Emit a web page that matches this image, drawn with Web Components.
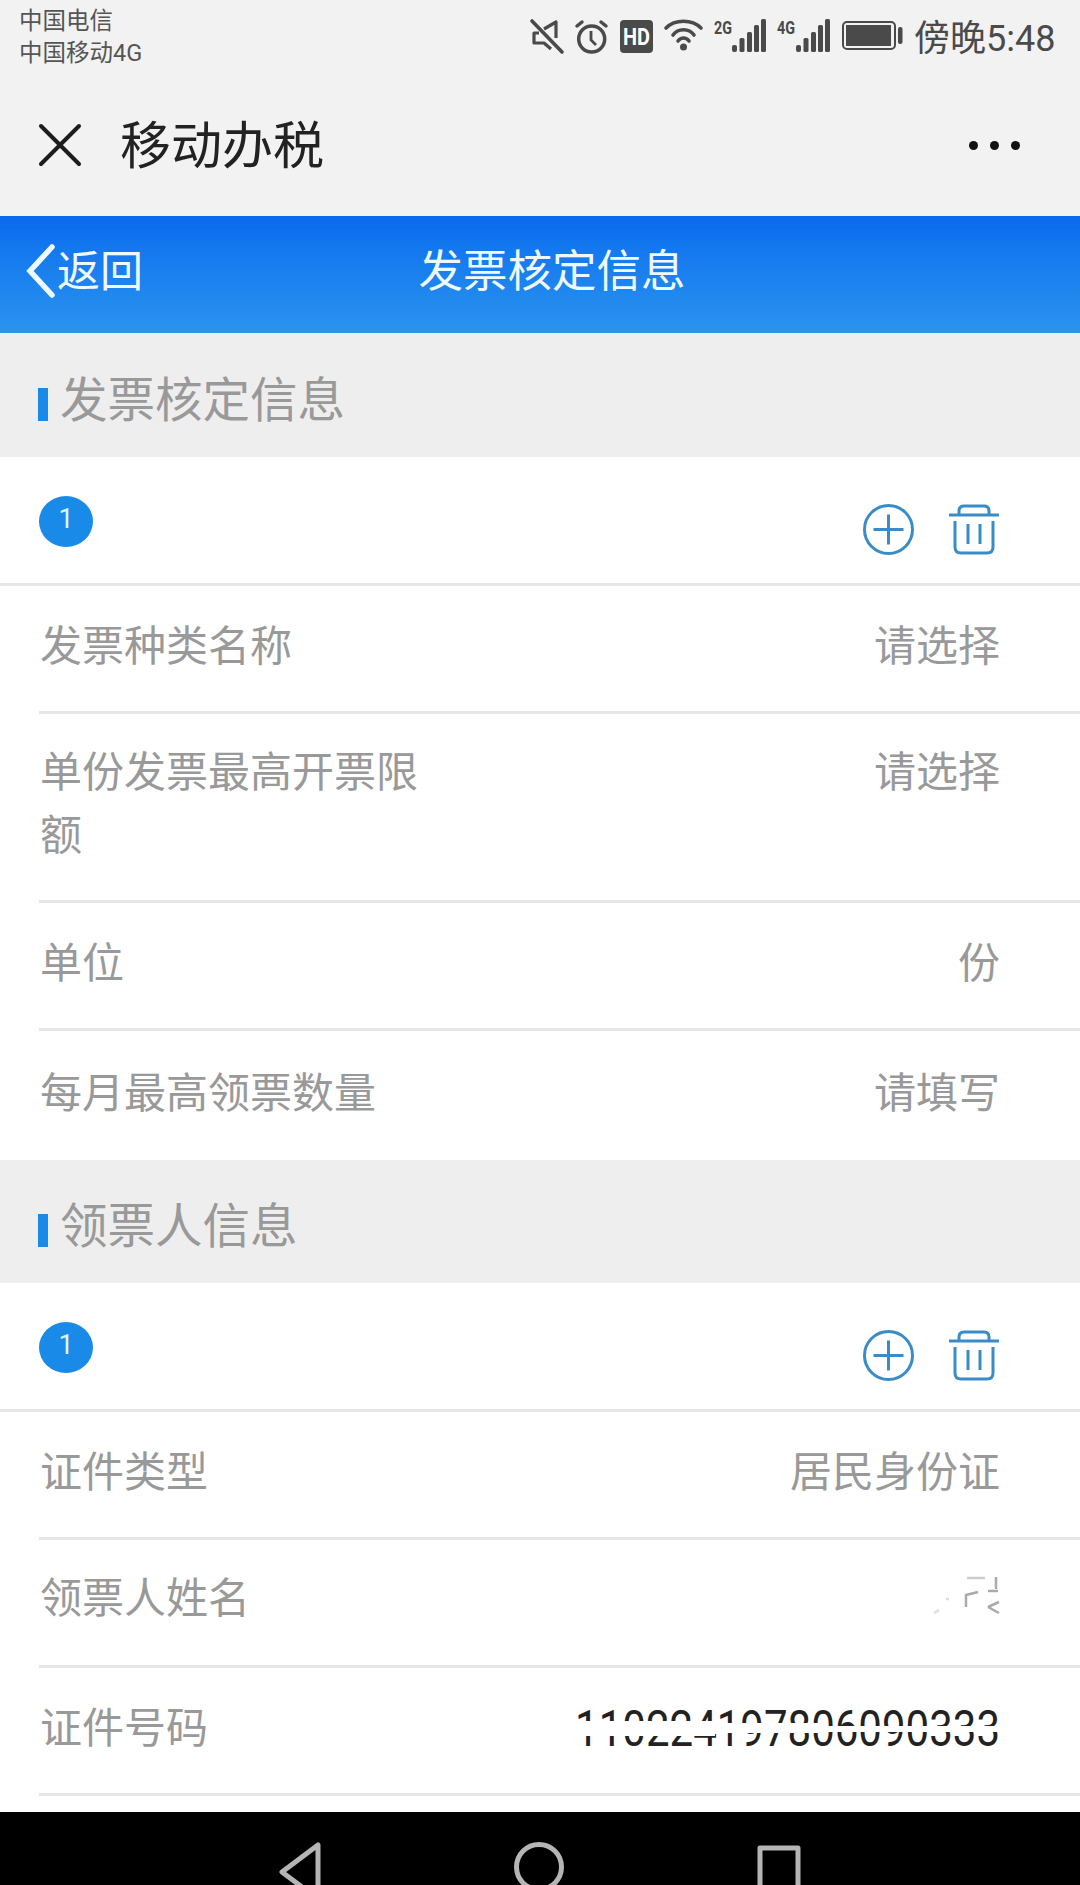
<!DOCTYPE html>
<html lang="zh">
<head>
<meta charset="utf-8">
<title>发票核定信息</title>
<style>
  html, body { margin: 0; padding: 0; }
  body {
    width: 1080px; height: 1885px; overflow: hidden; background: #fff;
    display: flex; flex-direction: column;
    font-family: Roboto, "Noto Sans CJK SC", sans-serif;
  }
</style>
</head>
<body>
  <status-bar></status-bar>
  <app-bar>移动办税</app-bar>
  <nav-bar back="返回">发票核定信息</nav-bar>
  <section-head style="height:124px">发票核定信息</section-head>
  <index-row>1</index-row>
  <form-row value="请选择">发票种类名称</form-row>
  <form-row value="请选择" class="tall">单份发票最高开票限额</form-row>
  <form-row value="份">单位</form-row>
  <form-row value="请填写" last>每月最高领票数量</form-row>
  <section-head>领票人信息</section-head>
  <index-row>1</index-row>
  <form-row value="居民身份证">证件类型</form-row>
  <form-row style="padding-top:27px;padding-bottom:35px">领票人姓名<redacted-name slot="value"></redacted-name></form-row>
  <form-row>证件号码<redacted-id slot="value">110224197806090333</redacted-id></form-row>
  <key-bar></key-bar>

<script>
const statusTemplate = `
<style>
  :host { display: flex; height: 72px; background: #f2f2f2; color: #4a4a4a; align-items: flex-start; justify-content: space-between; }
  .carriers { padding: 5px 0 0 19px; font-size: 23.5px; line-height: 32px; color: #555; }
  .icons { display: flex; align-items: flex-start; gap: 11.5px; height: 52px; padding: 20px 26px 0 0; }
  svg { display: block; overflow: visible; }
  .time { font-size: 36px; line-height: 34px; width: 140px; white-space: nowrap; margin-top: 2px; }
  text { font-family: Roboto, sans-serif; font-weight: 700; }
</style>
<div class="carriers"><div>中国电信</div><div>中国移动4G</div></div>
<div class="icons">
  <svg width="33" height="33" viewBox="0 0 33 33" fill="none" stroke="#4a4a4a" stroke-width="3.200" stroke-linejoin="round">
    <path d="M8 13H3v10h10l7 6M13 9l12-7v16"/>
    <path d="M1 1l30 31" stroke-width="3.600" stroke-linecap="round"/>
  </svg>
  <svg width="33" height="33" viewBox="0 0 33 33" fill="none" stroke="#4a4a4a" stroke-width="3.500">
    <circle cx="16.700" cy="19" r="13"/>
    <path d="M16 11v9l5 5" stroke-width="2.800"/>
    <path d="M2 6l5-4M31 6l-5-4" stroke-linecap="round"/>
  </svg>
  <svg width="33" height="33" viewBox="0 0 33 33">
    <rect width="33" height="33" rx="4" fill="#4a4a4a"/>
    <text x="16.500" y="25" font-size="24" fill="#fff" text-anchor="middle" textLength="27" lengthAdjust="spacingAndGlyphs">HD</text>
  </svg>
  <svg width="38" height="33" viewBox="0 0 38 33" fill="none" stroke="#4a4a4a" stroke-width="3.600" stroke-linecap="round">
    <path d="M2 8C11-1 28-1 37 8"/>
    <path d="M9 15C14 8 25 8 30 15"/>
    <path d="M14 21C17 17 22 17 25 21"/>
    <circle cx="19.500" cy="27" r="3.500" fill="#4a4a4a" stroke="none"/>
  </svg>
  <svg width="52" height="34" viewBox="0 0 52 34" fill="#4a4a4a" style="margin-top:-1px">
    <text x="0" y="15" font-size="19" textLength="18" lengthAdjust="spacingAndGlyphs">2G</text>
    <rect x="18" y="26" width="5" height="7" rx="2"/><rect x="25.500" y="19" width="5" height="14" rx="1.500"/><rect x="33" y="13" width="5" height="20" rx="1.500"/><rect x="40" y="6" width="5" height="27" rx="1.500"/><rect x="47" y="0" width="5" height="33" rx="1.500"/>
  </svg>
  <svg width="53" height="34" viewBox="0 0 53 34" fill="#4a4a4a" style="margin-top:-1px">
    <text x="0" y="15" font-size="19" textLength="18" lengthAdjust="spacingAndGlyphs">4G</text>
    <rect x="19" y="26" width="5" height="7" rx="2"/><rect x="26.500" y="19" width="5" height="14" rx="1.500"/><rect x="34" y="13" width="5" height="20" rx="1.500"/><rect x="41" y="6" width="5" height="27" rx="1.500"/><rect x="48" y="0" width="5" height="33" rx="1.500"/>
  </svg>
  <svg width="61" height="30" viewBox="0 0 61 30" style="margin-top:1px">
    <rect x="1" y="1" width="52" height="27" rx="4" fill="none" stroke="#4a4a4a" stroke-width="2"/>
    <rect x="4" y="4" width="45" height="21" fill="#4a4a4a"/>
    <rect x="56" y="6" width="4.500" height="17" rx="2" fill="#4a4a4a"/>
  </svg>
  <div class="time">傍晚5:48</div>
</div>`;

class StatusBar extends HTMLElement {
  constructor() {
    super();
    this.attachShadow({ mode: "open" }).innerHTML = statusTemplate;
  }
}

const appBarTemplate = `
<style>
  :host { display: flex; height: 142px; padding: 2px 0 0 38px; background: #f2f2f2; align-items: center; color: #222; }
  .close { display: block; margin-right: 38px; }
  .title { flex: 1; font-size: 51px; line-height: 60px; margin-top: 4px; }
  .more { display: flex; gap: 12px; padding-right: 60px; }
  .more i { width: 9px; height: 9px; border-radius: 50%; background: #111; }
</style>
<svg class="close" width="44" height="44" viewBox="0 0 44 44" fill="none" stroke="#1c1c1c" stroke-width="4" stroke-linecap="round"><path d="M3 3l38 38M41 3L3 41"/></svg>
<div class="title"><slot></slot></div>
<div class="more"><i></i><i></i><i></i></div>`;

class AppBar extends HTMLElement {
  constructor() {
    super();
    this.attachShadow({ mode: "open" }).innerHTML = appBarTemplate;
  }
}

const navBarTemplate = `
<style>
  :host { display: grid; grid-template-columns: 1fr auto 1fr; height: 117px; align-items: center; color: #eef8ff;
    background: linear-gradient(#0a68ee, #1479ef 30%, #2a92ee 96%, #2a9ad2); }
  .back { display: flex; align-items: center; padding-left: 26px; gap: 1px; font-size: 43px; }
  .label { margin-top: -14px; }
  .title { font-size: 44.500px; padding-left: 24px; margin-top: -14px; }
  svg { display: block; margin-top: -8px; }
</style>
<div class="back">
  <svg width="30" height="54" viewBox="0 0 30 54" fill="none" stroke="#eef8ff" stroke-width="5.500" stroke-linecap="round"><path d="M26 3L4 27l22 24"/></svg>
  <span class="label"></span>
</div>
<div class="title"><slot></slot></div>
<div></div>`;

class NavBar extends HTMLElement {
  constructor() {
    super();
    this.attachShadow({ mode: "open" }).innerHTML = navBarTemplate;
  }
  connectedCallback() {
    this.shadowRoot.querySelector(".label").textContent = this.getAttribute("back") || "";
  }
}

const sectionTemplate = `
<style>
  :host { display: flex; height: 123px; background: #eeeeee; align-items: center; padding: 0 0 0 38px; gap: 12px; color: #999; font-size: 47.500px; }
  .mark { width: 10px; height: 33px; background: #1a8ae8; margin-top: 18px; }
  .text { margin-top: 2px; }
</style>
<div class="mark"></div><div class="text"><slot></slot></div>`;

class SectionHead extends HTMLElement {
  constructor() {
    super();
    this.attachShadow({ mode: "open" }).innerHTML = sectionTemplate;
  }
}

const indexTemplate = `
<style>
  :host { display: flex; height: 126px; background: #fff; border-bottom: 3px solid #e6e6e6; justify-content: space-between; padding: 0 81px 0 39px; }
  .badge { width: 54px; height: 51px; margin-top: 39px; border-radius: 50%; background: #1a8ae8; color: #dff6ff; font-size: 27px; line-height: 46px; text-align: center; }
  .actions { display: flex; gap: 35px; padding-top: 47px; }
  svg { display: block; }
</style>
<div class="badge"><slot></slot></div>
<div class="actions">
  <svg width="51" height="51" viewBox="0 0 51 51" fill="none" stroke="#3a8cc8" stroke-width="3"><circle cx="25.500" cy="25.500" r="24"/><path d="M10.500 25.500h30M25.500 10.500v30"/></svg>
  <svg width="50" height="51" viewBox="0 0 50 51" fill="none" stroke="#3a8cc8" stroke-width="3">
    <path d="M0 11h50"/>
    <path d="M10 11V7q0-5 5-5h20q5 0 5 5v4"/>
    <path d="M6 17v26q0 6 6 6h26q6 0 6-6V17"/>
    <path d="M19 20v20M31 20v20"/>
  </svg>
</div>`;

class IndexRow extends HTMLElement {
  constructor() {
    super();
    this.attachShadow({ mode: "open" }).innerHTML = indexTemplate;
  }
}

const formRowTemplate = `
<style>
  :host { display: flex; justify-content: space-between; align-items: flex-start; margin-left: 39px; padding: 29px 80px 33px 1px; background: #fff;
    border-bottom: 3px solid #e6e6e6; font-size: 42px; line-height: 63px; color: #999; }
  :host([last]) { border-bottom: 0; padding-top: 31px; padding-bottom: 35px; }
  :host(.tall) { padding-top: 27px; padding-bottom: 33px; }
  .label { width: 400px; }
  .value { text-align: right; white-space: nowrap; }
</style>
<div class="label"><slot></slot></div>
<div class="value"><slot name="value"></slot><span class="text"></span></div>`;

class FormRow extends HTMLElement {
  constructor() {
    super();
    this.attachShadow({ mode: "open" }).innerHTML = formRowTemplate;
  }
  connectedCallback() {
    this.shadowRoot.querySelector(".text").textContent = this.getAttribute("value") || "";
  }
}

// what is left of the name after it was rubbed out in the source picture
const redactedNameTemplate = `
<style>
  :host { display: block; width: 78px; height: 63px; }
  svg { display: block; }
</style>
<svg width="78" height="63" viewBox="0 0 78 63" fill="none" stroke="#aaa" stroke-width="2.500">
  <path d="M45 11h18" stroke="#ccc"/>
  <path d="M74 10v12M66 24h10M44 28l12-3M44 27v13M66 40l11-5M66 40l11 6"/>
  <path d="M12 46l5-3M24 32h3" stroke="#ddd"/>
</svg>`;

class RedactedName extends HTMLElement {
  constructor() {
    super();
    this.attachShadow({ mode: "open" }).innerHTML = redactedNameTemplate;
  }
}

const redactedIdTemplate = `
<style>
  :host { display: block; position: relative; width: 425px; height: 63px; overflow: hidden; color: #222; }
  .digits { position: absolute; right: 0; top: 0; font-size: 42px; line-height: 63px; white-space: nowrap; transform: scaleY(1.18); }
  /* white smears lying over the number */
  .smear { position: absolute; background: #fff; }
</style>
<div class="digits"><slot></slot></div>
<div class="smear" style="left:0;right:0;top:29px;height:6px"></div>
<div class="smear" style="left:0;width:140px;top:24px;height:15px"></div>
<div class="smear" style="left:135px;width:110px;top:26px;height:10px"></div>
<div class="smear" style="left:20px;width:28px;top:35px;height:4px"></div>`;

class RedactedId extends HTMLElement {
  constructor() {
    super();
    this.attachShadow({ mode: "open" }).innerHTML = redactedIdTemplate;
  }
}

const keyBarTemplate = `
<style>
  :host { display: block; height: 73px; margin-top: auto; background: #000; overflow: hidden; }
  .keys { display: flex; justify-content: space-between; padding: 30px 279px 0 279px; }
  svg { display: block; flex: none; }
</style>
<div class="keys">
  <svg width="42" height="60" viewBox="0 0 42 60" fill="none" stroke="#b5b5b5" stroke-width="5" stroke-linejoin="round"><path d="M39 3v54L3 30z"/></svg>
  <svg width="50" height="60" viewBox="0 0 50 60" fill="none" stroke="#b5b5b5" stroke-width="5"><circle cx="25" cy="25" r="22.500"/></svg>
  <svg width="44" height="60" viewBox="0 0 44 60" fill="none" stroke="#b5b5b5" stroke-width="5" stroke-linejoin="round"><rect x="3" y="6" width="38" height="50"/></svg>
</div>`;

class KeyBar extends HTMLElement {
  constructor() {
    super();
    this.attachShadow({ mode: "open" }).innerHTML = keyBarTemplate;
  }
}

customElements.define("status-bar", StatusBar);
customElements.define("app-bar", AppBar);
customElements.define("nav-bar", NavBar);
customElements.define("section-head", SectionHead);
customElements.define("index-row", IndexRow);
customElements.define("form-row", FormRow);
customElements.define("redacted-name", RedactedName);
customElements.define("redacted-id", RedactedId);
customElements.define("key-bar", KeyBar);
</script>
</body>
</html>
